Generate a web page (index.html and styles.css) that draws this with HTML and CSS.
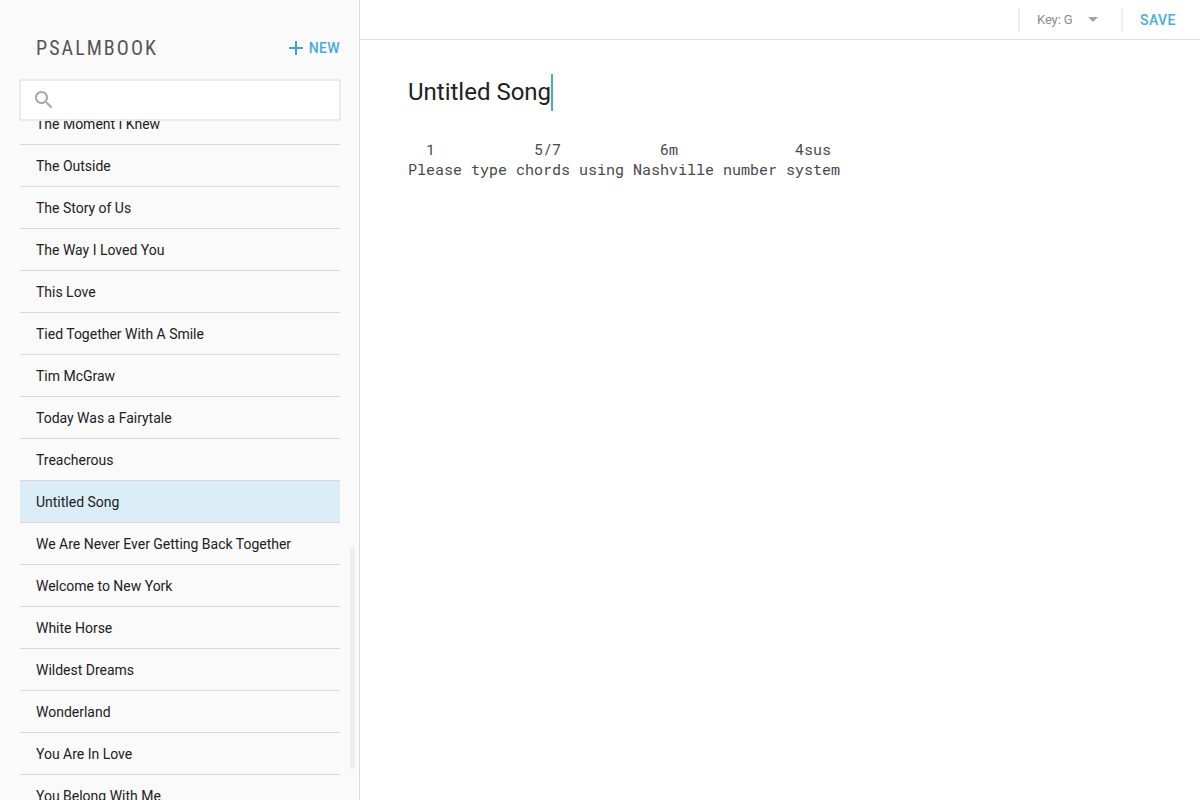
FILE: index.html
```html
<!DOCTYPE html>
<html lang="en">
<head>
<meta charset="utf-8">
<title>Psalmbook</title>
<link rel="stylesheet" href="styles.css">
</head>
<body>
<div class="app">
  <aside class="sidebar">
    <header class="brand-row">
      <h1 class="brand">PSALMBOOK</h1>
      <button class="new-button"><svg class="plus" viewBox="0 0 14 14"><path d="M7 0v14M0 7h14"/></svg>NEW</button>
    </header>
    <div class="search">
      <svg class="search-icon" viewBox="3 3 17.5 17.5"><path d="M15.5 14h-.79l-.28-.27C15.41 12.59 16 11.11 16 9.5 16 5.91 13.09 3 9.5 3S3 5.91 3 9.5 5.91 16 9.5 16c1.61 0 3.09-.59 4.23-1.57l.27.28v.79l5 4.99L20.49 19l-4.99-5zm-6 0C7.01 14 5 11.99 5 9.5S7.01 5 9.5 5 14 7.01 14 9.5 11.99 14 9.5 14z"/></svg>
    </div>
    <div class="list-view">
      <ul class="songs">
        <li class="song">The Moment I Knew</li>
        <li class="song">The Outside</li>
        <li class="song">The Story of Us</li>
        <li class="song">The Way I Loved You</li>
        <li class="song">This Love</li>
        <li class="song">Tied Together With A Smile</li>
        <li class="song">Tim McGraw</li>
        <li class="song">Today Was a Fairytale</li>
        <li class="song">Treacherous</li>
        <li class="song selected">Untitled Song</li>
        <li class="song">We Are Never Ever Getting Back Together</li>
        <li class="song">Welcome to New York</li>
        <li class="song">White Horse</li>
        <li class="song">Wildest Dreams</li>
        <li class="song">Wonderland</li>
        <li class="song">You Are In Love</li>
        <li class="song">You Belong With Me</li>
      </ul>
    </div>
    <div class="scroll-thumb"></div>
  </aside>
  <main class="editor">
    <div class="toolbar">
      <div class="key-select">Key: G<span class="caret"></span></div>
      <button class="save-button">SAVE</button>
    </div>
    <div class="sheet">
      <h2 class="title"><span class="title-text">Untitled Song</span><span class="cursor"></span></h2>
      <pre class="chords">  1           5/7           6m             4sus
Please type chords using Nashville number system</pre>
    </div>
  </main>
</div>
</body>
</html>
```

FILE: styles.css
```css
* { box-sizing: border-box; }
body { margin: 0; font-family: Roboto, sans-serif; color: #212121; background: #fff; }
button { border: 0; background: none; padding: 0; font: inherit; }
.app { display: flex; width: 1200px; height: 800px; overflow: hidden; }
.sidebar { position: relative; display: flex; flex-direction: column; width: 360px; height: 800px; padding: 0 19px; background: #fafafa; border-right: 1px solid #dadada; }
.brand-row { display: flex; align-items: center; justify-content: space-between; flex: none; height: 79px; padding: 17px 0 0 17px; }
.brand { margin: 0; font-family: "Roboto Condensed", Roboto, sans-serif; font-size: 20px; font-weight: 400; letter-spacing: 2.05px; color: #555; }
.new-button { display: flex; align-items: center; gap: 6px; font-size: 14px; font-weight: 500; letter-spacing: 0.4px; color: #45addc; }
.plus { width: 14px; height: 14px; fill: none; stroke: #3ea9d8; stroke-width: 2; }
.search { display: flex; align-items: center; flex: none; width: 322px; height: 42px; padding-left: 14px; background: #fff; border: 2px solid #ebebeb; }
.search-icon { width: 17.5px; height: 17.5px; fill: #a8a8a8; }
.list-view { flex: 1; min-height: 0; padding-left: 1px; width: 321px; overflow: hidden; }
.songs { list-style: none; margin: -18px 0 0; padding: 0; }
.song { height: 42px; padding-left: 16px; border-bottom: 1px solid #dadada; font-size: 14px; line-height: 42px; letter-spacing: -0.01px; }
.selected { background: #dbedf7; }
.scroll-thumb { position: absolute; left: 350px; top: 547px; width: 5px; height: 222px; border-radius: 2px; background: #eee; }
.editor { flex: 1; }
.toolbar { display: flex; align-items: center; justify-content: flex-end; height: 40px; border-bottom: 1px solid #dadada; }
.key-select { display: flex; align-items: center; justify-content: space-between; width: 105px; height: 24px; padding: 0 23px 0 17px; border: solid #eee; border-width: 0 2px; font-size: 13px; letter-spacing: -0.1px; color: #8c8c8c; }
.caret { border: 5px solid transparent; border-top-color: #a5a5a5; border-bottom: 0; }
.save-button { width: 77px; padding-left: 17px; text-align: left; font-size: 14px; font-weight: 500; letter-spacing: 0.4px; color: #45addc; }
.sheet { padding: 34px 48px 0; }
.title { display: flex; height: 37px; margin: 0; font-size: 24px; font-weight: 400; }
.title-text { line-height: 36px; }
.cursor { width: 2px; height: 37px; background: #45a9d3; }
.chords { margin: 28px 0 0; font-family: "Roboto Mono", "DejaVu Sans Mono", monospace; font-size: 15px; line-height: 20px; color: #484848; }
```
